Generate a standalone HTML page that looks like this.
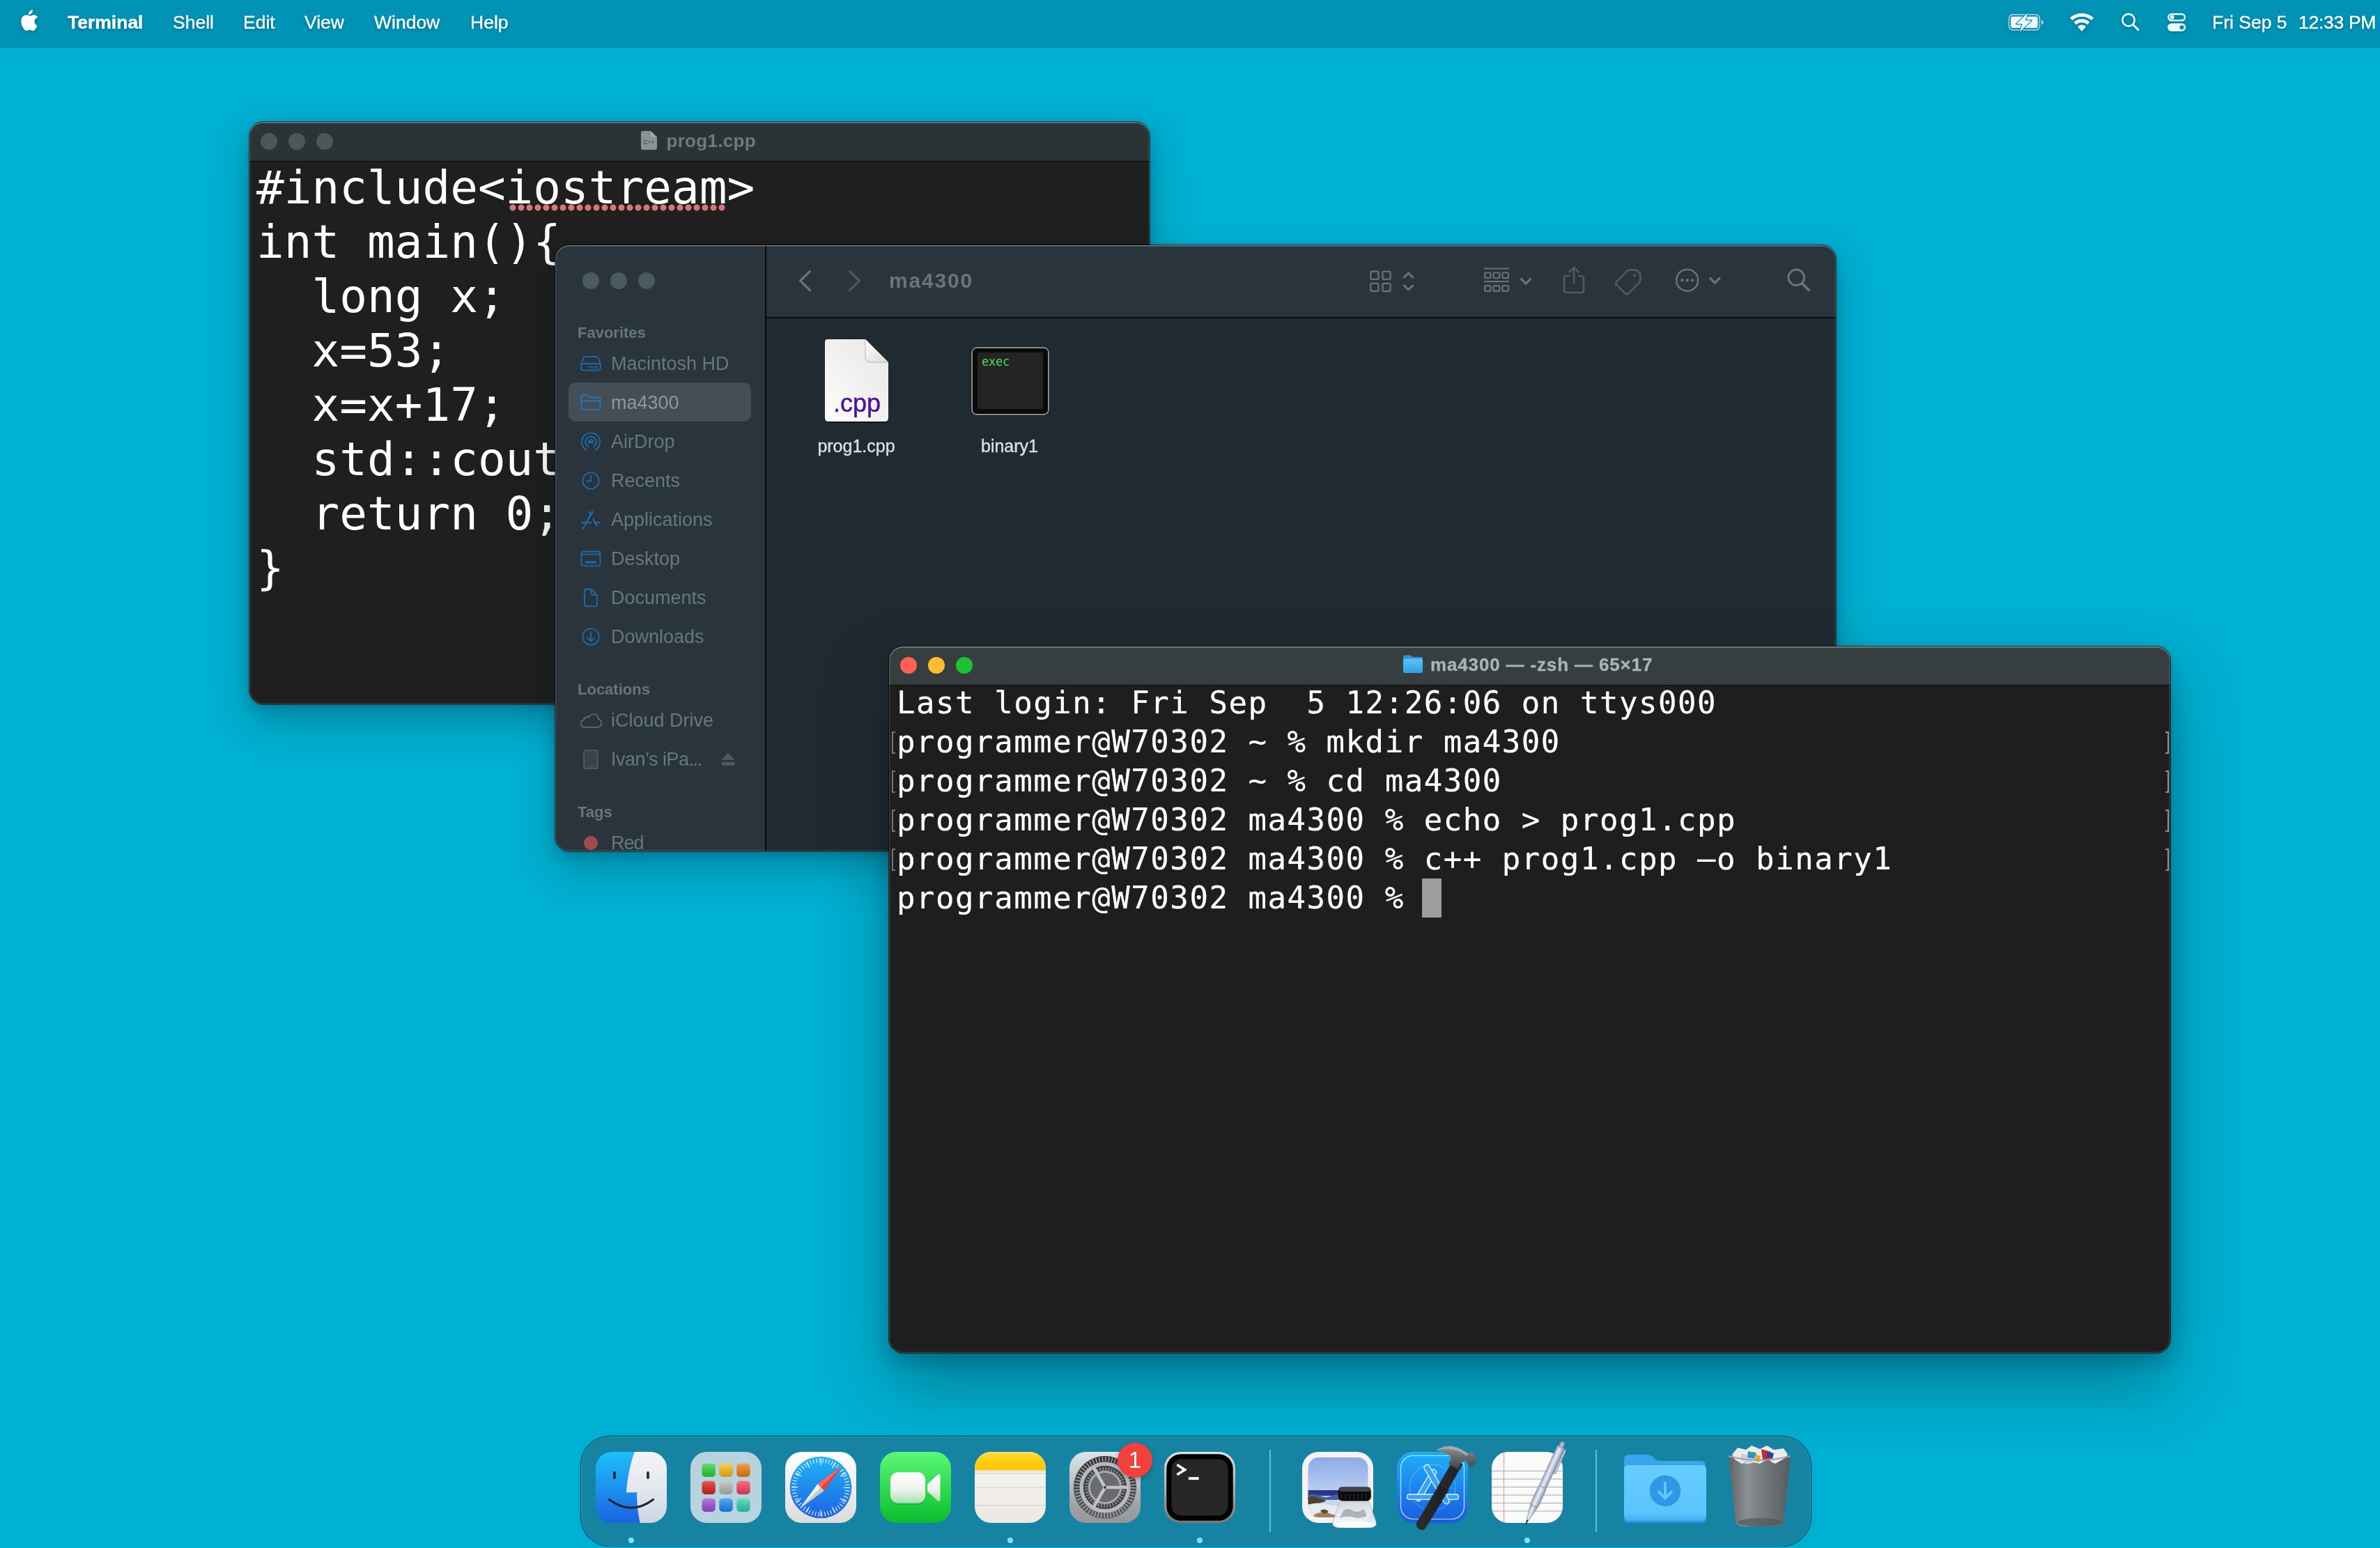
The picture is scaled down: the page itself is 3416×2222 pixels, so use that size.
<!DOCTYPE html>
<html lang="en">
<head>
<meta charset="utf-8">
<title>Desktop</title>
<style>
*{box-sizing:border-box;margin:0;padding:0}
html,body{width:3416px;height:2222px;overflow:hidden}
body{position:relative;background:#00b0d2;font-family:"Liberation Sans",sans-serif;color:#fff;-webkit-font-smoothing:antialiased}
.abs{position:absolute}
/* ---------- menu bar ---------- */
#menubar{will-change:transform;position:absolute;left:0;top:0;width:3416px;height:68.6px;background:#0093b5}
#menubar .mi{position:absolute;top:0;height:68px;line-height:64px;font-size:26.5px;color:#fff;white-space:nowrap;text-shadow:0 2px 4px rgba(0,40,60,.35);-webkit-text-stroke:.35px #fff}
#menubar .b{font-weight:bold}
/* ---------- windows ---------- */
.win{position:absolute;border-radius:20px;overflow:hidden}
.win .in{position:absolute;will-change:transform}
.win .rim{position:absolute;left:0;top:0;right:0;bottom:0;border-radius:20px;pointer-events:none}
.shadow{position:absolute;border-radius:20px}
.tl{position:absolute;width:24px;height:24px;border-radius:50%}
.mono{font-family:"DejaVu Sans Mono","Liberation Mono",monospace}
/* editor */
#ed{left:358px;top:175px;width:1292px;height:836px;background:#1e1f1e;box-shadow:0 0 0 1px rgba(0,0,0,.6)}
#ed .tb{position:absolute;left:0;top:0;width:100%;height:57px;background:#2b3335;border-bottom:1.5px solid #050606}
#ed .tl{background:#4c5759;top:16px}
#ed .title{position:absolute;left:599.5px;top:-1px;line-height:56px;font-size:26px;font-weight:bold;color:#6f787b;white-space:nowrap;letter-spacing:.3px}
#ed pre{position:absolute;left:11px;top:55.6px;font-size:66px;line-height:78px;color:#fffffb;white-space:pre}
/* finder */
#fi{left:797px;top:352px;width:1838px;height:870px;background:#202a31;box-shadow:0 0 0 1px rgba(0,0,0,.65)}
#fi .side{position:absolute;left:0;top:0;width:302px;height:100%;background:#29343c}
#fi .div{position:absolute;left:302px;top:0;width:2px;height:100%;background:#070a0c}
#fi .tbar{position:absolute;left:304px;top:0;right:0;height:105.5px;background:#29343c;border-bottom:2px solid #0b0f12}
#fi .tl{background:#4d5961;top:40px}
#fi .sh{position:absolute;left:33px;font-size:22px;font-weight:bold;color:#66757e;white-space:nowrap}
#fi .si{position:absolute;left:81px;font-size:27px;color:#66777f;white-space:nowrap;line-height:56px;height:56px}
#fi .sel{position:absolute;left:20px;top:198px;width:262px;height:56px;border-radius:10px;background:#434e56}
#fi .ico{position:absolute;left:35px;width:34px;height:34px;margin-top:1px}
#fi .fl{position:absolute;font-size:25px;color:#dde1e4;white-space:nowrap;text-align:center;-webkit-text-stroke:.35px #dde1e4}
/* terminal */
#te{left:1276px;top:928px;width:1839px;height:1014px;background:#1e1e1e;box-shadow:0 0 0 1px rgba(0,0,0,.75)}
#te .tb{position:absolute;left:0;top:0;width:100%;height:57px;background:#363e40;border-bottom:1.5px solid #070808}
#te .title{position:absolute;top:-1px;-webkit-text-stroke:.3px #a9b4b4;line-height:56px;font-size:26px;font-weight:bold;color:#a9b4b4;white-space:nowrap;letter-spacing:.85px}
#te pre{position:absolute;left:11px;top:54px;font-size:44px;letter-spacing:1.535px;-webkit-text-stroke:.2px #fff;line-height:56px;color:#fff;white-space:pre}
#te .br{position:absolute;width:8px;height:38px;border:2px solid #6a6a6a}
/* dock */
#dock{position:absolute;left:833.5px;top:2062px;width:1765px;height:156.5px;border-radius:42px;background:#1783a3;box-shadow:0 0 0 1.5px rgba(10,70,95,.75), inset 0 0 0 1px rgba(120,200,225,.25)}
.di{position:absolute;top:2084px;width:102px;height:102px;border-radius:23px;overflow:hidden}
.dot{position:absolute;top:2207px;width:8px;height:8px;border-radius:50%;background:#6fe9ff}
.dsep{position:absolute;top:2081px;width:2px;height:118px;background:#46c8ea}
</style>
</head>
<body>
<!-- MENUBAR -->
<div id="menubar">
  <svg class="abs" style="left:28.5px;top:14px;filter:drop-shadow(0 2px 3px rgba(0,50,70,.3))" width="28.5" height="33.600" viewBox="0 0 28 33"><path fill="#fff" d="M19.6 0c.2 1.8-.5 3.500-1.500 4.800-1.100 1.300-2.800 2.300-4.500 2.200-.2-1.700.6-3.500 1.600-4.600C16.300 1.100 18.100.1 19.600 0zM25.300 11.200c-.2.100-3.100 1.800-3.100 5.400 0 4.200 3.700 5.700 3.800 5.700 0 .1-.6 2-1.900 4-1.200 1.700-2.400 3.400-4.300 3.400s-2.400-1.100-4.500-1.100c-2.100 0-2.800 1.100-4.500 1.100-1.700 0-3-1.600-4.400-3.600C4.700 23.700 3.300 19.900 3.300 16.300c0-5.800 3.800-8.900 7.500-8.900 2 0 3.600 1.300 4.900 1.300 1.200 0 3.100-1.400 5.300-1.400.9 0 4 .1 6 3z" transform="translate(-2,0)"/></svg>
  <div class="mi b" style="left:97px">Terminal</div>
  <div class="mi" style="left:248px">Shell</div>
  <div class="mi" style="left:349px">Edit</div>
  <div class="mi" style="left:437px">View</div>
  <div class="mi" style="left:537px">Window</div>
  <div class="mi" style="left:675px">Help</div>

  <svg class="abs" style="left:2878px;top:14px;filter:drop-shadow(0 2px 3px rgba(0,50,70,.3))" width="60" height="36" viewBox="0 0 60 36">
    <rect x="5.400" y="7.100" width="44" height="21.800" rx="5.500" fill="none" stroke="rgba(255,255,255,.55)" stroke-width="2"/>
    <path d="M52 14.500q3 .5 3 3.500t-3 3.500z" fill="rgba(255,255,255,.6)"/>
    <rect x="8" y="9.700" width="38.800" height="16.600" rx="3" fill="#eef7fa"/>
    <path d="M32.500 4.600L16 20.300h8.800L21 31.400l16.800-16h-8.900z" fill="#eef7fa" stroke="#0093b5" stroke-width="2.400" stroke-linejoin="round" paint-order="stroke"/>
  </svg>
  <svg class="abs" style="left:2968px;top:14px;filter:drop-shadow(0 2px 3px rgba(0,50,70,.3))" width="40" height="34" viewBox="0 0 40 34" fill="none" stroke="#eef7fa">
    <path d="M4.680 13.280a22.900 22.900 0 0 1 30.640 0" stroke-width="5"/>
    <path d="M10.300 19.530a14.500 14.500 0 0 1 19.400 0" stroke-width="5"/>
    <path d="M20 30.600l-5.700-6.300a8.300 8.300 0 0 1 11.400 0z" fill="#eef7fa" stroke="#eef7fa" stroke-width=".8" stroke-linejoin="round"/>
  </svg>
  <svg class="abs" style="left:3042px;top:15px;filter:drop-shadow(0 2px 3px rgba(0,50,70,.3))" width="32" height="32" viewBox="0 0 32 32" fill="none" stroke="#eef7fa" stroke-linecap="round">
    <circle cx="13" cy="13.800" r="8.700" stroke-width="2.600"/><path d="M19.500 20.300l7.300 7.300" stroke-width="3"/>
  </svg>
  <svg class="abs" style="left:3108px;top:15px;filter:drop-shadow(0 2px 3px rgba(0,50,70,.3))" width="34" height="34" viewBox="0 0 34 34">
    <rect x="4.200" y="5.200" width="23.800" height="9.200" rx="4.600" fill="none" stroke="#eef7fa" stroke-width="2.400"/>
    <circle cx="9.600" cy="9.800" r="3" fill="#eef7fa"/>
    <rect x="3" y="18.600" width="26.200" height="11.400" rx="5.700" fill="#eef7fa"/>
    <circle cx="23.500" cy="24.300" r="3.100" fill="#0093b5"/>
  </svg>
  <div class="mi" style="left:3175px">Fri Sep 5</div>
  <div class="mi" style="left:3299px;letter-spacing:-.3px">12:33 PM</div>
</div>

<!-- EDITOR WINDOW -->
<div class="shadow" style="left:357px;top:174px;width:1294px;height:838px;box-shadow:0 24px 56px rgba(0,28,42,.27), 0 5px 16px rgba(0,28,42,.18)"></div>
<div class="win" id="ed"><div class="in" style="left:-1px;top:0;width:1294px;height:836px">
  <div class="tb">
    <div class="tl" style="left:17px"></div><div class="tl" style="left:57px"></div><div class="tl" style="left:97px"></div>
    <svg class="abs" style="left:562px;top:12px" width="26" height="30" viewBox="0 0 26 30"><path d="M1 4q0-3 3-3h11l9 9v15q0 3-3 3h-17q-3 0-3-3z" fill="#8a9296"/><path d="M15 1v6q0 3 3 3h6z" fill="#a3aaad"/><text x="12.500" y="20" text-anchor="middle" font-family="Liberation Sans, sans-serif" font-size="8.500" fill="#3a4144">C++</text></svg>
    <div class="title">prog1.cpp</div>
  </div>
  <pre class="mono">#include&lt;iostream&gt;
int main(){
  long x;
  x=53;
  x=x+17;
  std::cout&lt;&lt;x;
  return 0;
}</pre>
  <div class="abs" style="left:372.5px;top:117.5px;width:312px;height:10px;background:radial-gradient(circle at 6px 5px,#d8777b 0,#d8777b 4px,rgba(216,119,123,0) 5px);background-size:12px 10px"></div>
</div><div class="rim" style="box-shadow:inset 0 1.5px 0 0 rgba(255,255,255,.28), inset 0 0 0 1.5px rgba(255,255,255,.13)"></div></div>

<!-- FINDER WINDOW -->
<div class="shadow" style="left:796px;top:351px;width:1840px;height:872px;box-shadow:0 24px 56px rgba(0,28,42,.27), 0 5px 16px rgba(0,28,42,.18)"></div>
<div class="win" id="fi"><div class="in" style="left:-1px;top:-1px;width:1840px;height:872px">
  <div class="side"></div>
  <div class="div"></div>
  <div class="tbar"></div>
  <div class="tl" style="left:40px"></div><div class="tl" style="left:80px"></div><div class="tl" style="left:120px"></div>
  <!-- sidebar -->
  <div class="sh" style="top:114px">Favorites</div>
  <div class="sel"></div>
  <div class="si" style="top:142.5px">Macintosh HD</div>
  <div class="si" style="top:198.5px;color:#8c989b">ma4300</div>
  <div class="si" style="top:254.5px">AirDrop</div>
  <div class="si" style="top:310.5px">Recents</div>
  <div class="si" style="top:366.5px">Applications</div>
  <div class="si" style="top:422.5px">Desktop</div>
  <div class="si" style="top:478.5px">Documents</div>
  <div class="si" style="top:534.5px">Downloads</div>
  <div class="sh" style="top:625.5px">Locations</div>
  <div class="si" style="top:654.75px">iCloud Drive</div>
  <div class="si" style="top:710.75px;letter-spacing:-.5px">Ivan’s iPa<span style="letter-spacing:-1.500px">...</span></div>
  <div class="sh" style="top:802px">Tags</div>
  <div class="si" style="top:831.25px;letter-spacing:-1px">Red</div>
  <div class="abs" style="left:42px;top:849px;width:20px;height:20px;border-radius:50%;background:#a14b4c"></div>
  <!-- sidebar icons -->
  <svg class="ico" style="top:152.5px" viewBox="0 0 36 36" fill="none" stroke="#1f6aa6" stroke-width="2" stroke-linejoin="round" stroke-linecap="round"><path d="M9.700 7.400h16.600q2.200 0 3 2.100l3 8.200q.3.900.3 1.800v4.100q0 4.600-4.600 4.600h-20q-4.600 0-4.600-4.600v-4.100q0-.9.300-1.800l3-8.200q.8-2.100 3-2.100z"/><path d="M3.700 19.600q.8-1.600 3.600-1.600h21.400q2.800 0 3.600 1.600"/><path stroke-width="1.500" d="M15.500 22v2.800M18.500 22v2.800M21.500 22v2.800M24.500 22v2.800M27.300 22v2.800"/></svg>
  <svg class="ico" style="top:208.500px" viewBox="0 0 36 36" fill="none" stroke="#2478b8" stroke-width="2" stroke-linejoin="round"><path d="M3.700 12.500v-3.300q0-2.600 2.600-2.600h5.200q1.400 0 2.300 1l1.500 1.700q.7.800 1.900.8h12.300q2.800 0 2.800 2.800v13q0 2.800-2.800 2.800h-23q-2.800 0-2.800-2.800zM3.700 15.200h28.600"/></svg>
  <svg class="ico" style="top:264.500px" viewBox="0 0 36 36" fill="none" stroke="#1f6aa6" stroke-width="2" stroke-linecap="round"><path d="M11.050 30.540a13.900 13.900 0 1 1 13.900 0"/><path d="M13.850 25.690a8.300 8.300 0 1 1 8.300 0"/><path d="M14.880 20.300a3.600 3.600 0 1 1 6.240 0"/><circle cx="18" cy="18.500" r="2" fill="#1f6aa6" stroke="none"/></svg>
  <svg class="ico" style="top:320.500px" viewBox="0 0 36 36" fill="none" stroke="#1f6aa6" stroke-width="2" stroke-linecap="round" stroke-linejoin="round"><circle cx="18" cy="18" r="12.300"/><path d="M18 10.500v8h-6"/></svg>
  <svg class="ico" style="top:376.500px" viewBox="0 0 36 36" fill="none" stroke="#1f6aa6" stroke-width="2.500" stroke-linecap="round"><path d="M20.800 5.800L8.600 27M15.200 5.800l3 5.200M21.600 17l5.800 10M4.200 22.400h13.600M23.600 22.400h8.200M7.200 29.400l-1 1.800"/></svg>
  <svg class="ico" style="top:432.500px" viewBox="0 0 36 36" fill="none" stroke="#1f6aa6" stroke-width="2" stroke-linejoin="round"><rect x="3.700" y="7" width="28.600" height="22" rx="3.400"/><path d="M3.700 11.300h28.600"/><rect x="9.500" y="21.800" width="17" height="3" rx="1" fill="#1f6aa6" stroke="none"/></svg>
  <svg class="ico" style="top:488.500px" viewBox="0 0 36 36" fill="none" stroke="#1f6aa6" stroke-width="2" stroke-linejoin="round"><path d="M8.400 8q0-3 3-3h7.200l9 9v14q0 3-3 3h-13.200q-3 0-3-3zM18.600 5v6q0 3 3 3h6"/></svg>
  <svg class="ico" style="top:544.500px" viewBox="0 0 36 36" fill="none" stroke="#1f6aa6" stroke-width="2" stroke-linecap="round" stroke-linejoin="round"><circle cx="18" cy="18" r="12.300"/><path d="M18 11.200v13M12.800 19.700l5.200 5 5.200-5"/></svg>
  <svg class="ico" style="top:664.750px" viewBox="0 0 36 36" fill="none" stroke="#5c6a72" stroke-width="1.900" stroke-linejoin="round"><path d="M10 28.400q-6.400 0-6.400-5.600 0-4.600 4.600-5.500.2-4.300 4.600-4.600 1.400 0 2.500.7 2.200-4.800 7.400-4.800 7 0 7.600 7.600 4.300 1 4.300 5.800 0 6.400-6.600 6.400z" transform="translate(-.6,0)"/></svg>
  <svg class="ico" style="top:720.750px" viewBox="0 0 36 36" fill="none" stroke="#4f5c64" stroke-width="1.900" stroke-linejoin="round"><rect x="7.600" y="4" width="20.800" height="28" rx="3" fill="#38444c"/><path d="M14 29h8" stroke-width="1.400"/></svg>
  <svg class="abs" style="left:238px;top:728px" width="22" height="22" viewBox="0 0 22 22" fill="#4c5962"><path d="M11 1.500l9.500 10.500h-19z"/><rect x="1.500" y="14.500" width="19" height="5.500" rx="1.500"/></svg>
  <!-- toolbar -->
  <svg class="abs" style="left:346px;top:34px" width="28" height="36" viewBox="0 0 28 36" fill="none" stroke="#66747c" stroke-width="3.200" stroke-linecap="round" stroke-linejoin="round"><path d="M20.400 4.500L6.600 18l13.800 13.500"/></svg>
  <svg class="abs" style="left:416px;top:34px" width="28" height="36" viewBox="0 0 28 36" fill="none" stroke="#4a5760" stroke-width="3.200" stroke-linecap="round" stroke-linejoin="round"><path d="M7.600 4.500L21.400 18 7.600 31.500"/></svg>
  <div class="abs" style="left:480px;top:32px;font-size:30px;font-weight:bold;line-height:40px;color:#68757c;white-space:nowrap;letter-spacing:1.8px">ma4300</div>
  <svg class="abs" style="left:1166px;top:32.500px" width="72" height="40" viewBox="0 0 72 40" fill="none" stroke="#65727a" stroke-width="2.300" stroke-linejoin="round" stroke-linecap="round"><rect x="5.300" y="5.700" width="11.200" height="11.200" rx="2"/><rect x="22.500" y="5.700" width="11.200" height="11.200" rx="2"/><rect x="5.300" y="22.800" width="11.200" height="11.200" rx="2"/><rect x="22.500" y="22.800" width="11.200" height="11.200" rx="2"/><path stroke-width="3" d="M53.200 14.200l6.300-6 6.300 6M53.200 25.800l6.300 6 6.300-6"/></svg>
  <svg class="abs" style="left:1330px;top:31px" width="80" height="42" viewBox="0 0 80 42" fill="none" stroke="#65727a" stroke-width="2.200" stroke-linejoin="round" stroke-linecap="round"><path d="M5 3.500h34M5 22.200h34"/><rect x="5" y="9.500" width="8.600" height="7.600" rx="1.500"/><rect x="17.700" y="9.500" width="8.600" height="7.600" rx="1.500"/><rect x="30.400" y="9.500" width="8.600" height="7.600" rx="1.500"/><rect x="5" y="28.200" width="8.600" height="7.600" rx="1.500"/><rect x="17.700" y="28.200" width="8.600" height="7.600" rx="1.500"/><rect x="30.400" y="28.200" width="8.600" height="7.600" rx="1.500"/><path stroke-width="3.200" d="M57.500 18.500l6.600 6.600 6.600-6.600"/></svg>
  <svg class="abs" style="left:1443px;top:28.500px" width="40" height="46" viewBox="0 0 40 46" fill="none" stroke="#4e5b63" stroke-width="2.700" stroke-linejoin="round" stroke-linecap="round"><path d="M13 16h-3q-4 0-4 4v16q0 4 4 4h20q4 0 4-4v-16q0-4-4-4h-3M20 26.500v-22M13.500 10.200l6.500-6.400 6.500 6.400"/></svg>
  <svg class="abs" style="left:1519px;top:28.500px" width="46" height="46" viewBox="0 0 46 46" fill="none" stroke="#4e5b63" stroke-width="2.700" stroke-linejoin="round"><path d="M5.400 24.300l15.200-15.400q1.600-1.600 3.800-1.600h7.400q2 0 3.400 1.400l2.600 2.600q1.400 1.400 1.400 3.400v7.400q0 2.200-1.600 3.800l-15.400 15.200q-2.400 2.400-4.800 0l-12-12q-2.400-2.400 0-4.800z"/><circle cx="30.800" cy="15.200" r="2" fill="#4e5b63" stroke="none"/></svg>
  <svg class="abs" style="left:1604px;top:30px" width="76" height="42" viewBox="0 0 76 42" fill="none" stroke="#66747c" stroke-width="2.500" stroke-linejoin="round" stroke-linecap="round"><circle cx="21.700" cy="21.200" r="15.500"/><circle cx="14.300" cy="21.200" r="2.100" fill="#66747c" stroke="none"/><circle cx="21.700" cy="21.200" r="2.100" fill="#66747c" stroke="none"/><circle cx="29.100" cy="21.200" r="2.100" fill="#66747c" stroke="none"/><path stroke-width="3.200" d="M54.800 18.500l6.600 6.600 6.600-6.600"/></svg>
  <svg class="abs" style="left:1765px;top:30px" width="42" height="42" viewBox="0 0 42 42" fill="none" stroke="#66747c" stroke-width="3" stroke-linecap="round"><circle cx="17.200" cy="17.300" r="11.300"/><path d="M25.600 25.800l9.300 9.300" stroke-width="3.800"/></svg>
  <!-- files -->
  <svg class="abs" style="left:380px;top:128px" width="108" height="134" viewBox="0 0 108 134">
    <defs><linearGradient id="pg" x1="0" y1="1" x2="1" y2="0"><stop offset="0" stop-color="#fdfdfc"/><stop offset=".5" stop-color="#f1f1ef"/><stop offset="1" stop-color="#e6e8e8"/></linearGradient>
    <linearGradient id="pf" x1="0" y1="0" x2="1" y2="1"><stop offset="0" stop-color="#ffffff"/><stop offset="1" stop-color="#d9dada"/></linearGradient></defs>
    <path d="M8 12q0-4 4-4h53l34 34v79q0 5-5 5h-81q-5 0-5-5z" fill="rgba(0,0,0,.35)" transform="translate(0,2)"/>
    <path d="M8 12q0-4 4-4h54l33 33v80q0 5-5 5h-81q-5 0-5-5z" fill="url(#pg)"/>
    <path d="M66 8l33 33h-25q-8 0-8-8z" fill="url(#pf)"/>
    <path d="M66 8v25q0 8 8 8h25" fill="none" stroke="rgba(0,0,0,.12)" stroke-width="2"/>
    <text x="54" y="112" text-anchor="middle" font-family="Liberation Sans, sans-serif" font-size="36" fill="#4b1296" stroke="#4b1296" stroke-width=".5">.cpp</text>
  </svg>
  <div class="fl" style="left:333px;top:275px;width:200px">prog1.cpp</div>
  <div class="abs" style="left:600px;top:148.5px;width:108px;height:94.5px;border-radius:6px;background:#0a0a0a;box-shadow:0 0 0 1.500px #a3abae, inset 0 0 0 1px #000"></div>
  <div class="abs" style="left:607px;top:155px;width:94px;height:81px;background:#242424"></div>
  <div class="abs mono" style="left:613px;top:156px;font-size:17px;line-height:24px;color:#4be05c;letter-spacing:-.2px">exec</div>
  <div class="fl" style="left:553px;top:275px;width:200px">binary1</div>
</div><div class="rim" style="box-shadow:inset 0 1.5px 0 0 rgba(255,255,255,.25), inset 0 0 0 1.5px rgba(255,255,255,.12)"></div></div>

<!-- TERMINAL WINDOW -->
<div class="shadow" style="left:1275px;top:927px;width:1841px;height:1016px;box-shadow:0 44px 96px rgba(0,22,34,.34), 0 10px 26px rgba(0,22,34,.22)"></div>
<div class="win" id="te"><div class="in" style="left:0;top:-1px;width:1840px;height:1016px">
  <div class="tb">
    <div class="tl" style="left:16px;top:16px;background:#fe5f57"></div>
    <div class="tl" style="left:56px;top:16px;background:#febc2e"></div>
    <div class="tl" style="left:96px;top:16px;background:#19c332"></div>
    <svg class="abs" style="left:737px;top:12px" width="30" height="28" viewBox="0 0 30 28"><defs><linearGradient id="tf" x1="0" y1="0" x2="0" y2="1"><stop offset="0" stop-color="#5fc3f6"/><stop offset="1" stop-color="#2f9fe6"/></linearGradient></defs><path d="M1 4q0-2.500 2.500-2.500h7q1.500 0 2.500 1l1.500 1.500h12q2.500 0 2.500 2.500v3h-28z" fill="#2d93d8"/><rect x="1" y="6.500" width="28" height="20.500" rx="2.500" fill="url(#tf)"/></svg>
    <div class="title" style="left:777px">ma4300 — -zsh — 65×17</div>
  </div>
  <pre class="mono">Last login: Fri Sep  5 12:26:06 on ttys000
programmer@W70302 ~ % mkdir ma4300
programmer@W70302 ~ % cd ma4300
programmer@W70302 ma4300 % echo &gt; prog1.cpp
programmer@W70302 ma4300 % c++ prog1.cpp –o binary1
programmer@W70302 ma4300 % </pre>
  <div class="abs" style="left:4px;top:122.5px;width:5px;height:32.500px;border:2px solid #767676;border-right:none"></div>
  <div class="abs" style="left:1831.500px;top:122.5px;width:5px;height:32.500px;border:2px solid #929292;border-left:none"></div>
  <div class="abs" style="left:4px;top:178.5px;width:5px;height:32.500px;border:2px solid #767676;border-right:none"></div>
  <div class="abs" style="left:1831.500px;top:178.5px;width:5px;height:32.500px;border:2px solid #929292;border-left:none"></div>
  <div class="abs" style="left:4px;top:234.5px;width:5px;height:32.500px;border:2px solid #767676;border-right:none"></div>
  <div class="abs" style="left:1831.500px;top:234.5px;width:5px;height:32.500px;border:2px solid #929292;border-left:none"></div>
  <div class="abs" style="left:4px;top:290.5px;width:5px;height:32.500px;border:2px solid #767676;border-right:none"></div>
  <div class="abs" style="left:1831.500px;top:290.5px;width:5px;height:32.500px;border:2px solid #929292;border-left:none"></div>
  <div class="abs" style="left:765px;top:334px;width:28px;height:56px;background:#9d9d9d"></div>
</div><div class="rim" style="box-shadow:inset 0 1.5px 0 0 rgba(255,255,255,.3), inset 0 0 0 1.5px rgba(255,255,255,.14)"></div></div>

<!-- DOCK -->

<div id="dock"></div>
<!-- Finder -->
<svg class="abs" style="left:855px;top:2084px" width="102" height="102" viewBox="0 0 102 102">
  <defs>
    <clipPath id="sq"><rect x="0" y="0" width="102" height="102" rx="23.500"/></clipPath>
    <linearGradient id="fb" x1="0" y1="0" x2="0" y2="1"><stop offset="0" stop-color="#1cc0fb"/><stop offset=".45" stop-color="#1c97f2"/><stop offset="1" stop-color="#1a63e0"/></linearGradient>
    <linearGradient id="fw" x1="0" y1="0" x2="0" y2="1"><stop offset="0" stop-color="#f4f4f6"/><stop offset=".5" stop-color="#e3e8ee"/><stop offset="1" stop-color="#ccd5e2"/></linearGradient>
  </defs>
  <g clip-path="url(#sq)">
    <rect width="102" height="102" fill="url(#fb)"/>
    <path d="M55.500 0C50 14 45 38 43.500 58.500h15.500c-.5 15 1.500 30 4.500 43.500h38.500v-102z" fill="url(#fw)"/>
    <path d="M55.500 0C50 14 45 38 43.500 58.500h15.500c-.5 15 1.500 30 4.500 43.500" fill="none" stroke="rgba(20,60,120,.25)" stroke-width="1"/>
  </g>
  <rect x="25.200" y="28" width="3.600" height="11" rx="1.800" fill="#1d2630"/>
  <rect x="73.200" y="28" width="3.600" height="11" rx="1.800" fill="#1d2630"/>
  <path d="M19.500 68.500Q51 92 82.500 68.500" fill="none" stroke="#1d2630" stroke-width="3.200" stroke-linecap="round"/>
</svg>
<!-- Launchpad -->
<svg class="abs" style="left:991px;top:2084px" width="102" height="102" viewBox="0 0 102 102">
  <defs>
    <linearGradient id="lg1" x1="0" y1="0" x2="0" y2="1"><stop offset="0" stop-color="#fff" stop-opacity=".25"/><stop offset="1" stop-color="#000" stop-opacity=".18"/></linearGradient>
  </defs>
  <rect width="102" height="102" rx="23.500" fill="#b6d3de"/>
  <g>
    <rect x="16.500" y="16.700" width="19.300" height="19.300" rx="5" fill="#2fd63d"/><rect x="41.400" y="16.700" width="19.300" height="19.300" rx="5" fill="#ffbe1c"/><rect x="66.300" y="16.700" width="19.300" height="19.300" rx="5" fill="#f5830f"/>
    <rect x="16.500" y="41.700" width="19.300" height="19.300" rx="5" fill="#e0261f"/><rect x="41.400" y="41.700" width="19.300" height="19.300" rx="5" fill="#b9bcbe"/><rect x="66.300" y="41.700" width="19.300" height="19.300" rx="5" fill="#fc3f60"/>
    <rect x="16.500" y="66.700" width="19.300" height="19.300" rx="5" fill="#a44fdc"/><rect x="41.400" y="66.700" width="19.300" height="19.300" rx="5" fill="#1e8ff7"/><rect x="66.300" y="66.700" width="19.300" height="19.300" rx="5" fill="#35d6b4"/>
  </g>
  <g fill="url(#lg1)">
    <rect x="16.500" y="16.700" width="19.300" height="19.300" rx="5"/><rect x="41.400" y="16.700" width="19.300" height="19.300" rx="5"/><rect x="66.300" y="16.700" width="19.300" height="19.300" rx="5"/>
    <rect x="16.500" y="41.700" width="19.300" height="19.300" rx="5"/><rect x="41.400" y="41.700" width="19.300" height="19.300" rx="5"/><rect x="66.300" y="41.700" width="19.300" height="19.300" rx="5"/>
    <rect x="16.500" y="66.700" width="19.300" height="19.300" rx="5"/><rect x="41.400" y="66.700" width="19.300" height="19.300" rx="5"/><rect x="66.300" y="66.700" width="19.300" height="19.300" rx="5"/>
  </g>
</svg>
<!-- Safari -->
<svg class="abs" style="left:1127px;top:2084px" width="102" height="102" viewBox="0 0 102 102">
  <defs>
    <linearGradient id="sb" x1="0" y1="0" x2="0" y2="1"><stop offset="0" stop-color="#ffffff"/><stop offset="1" stop-color="#dcdcdc"/></linearGradient>
    <linearGradient id="sc" x1="0" y1="0" x2="0" y2="1"><stop offset="0" stop-color="#1fb4f7"/><stop offset="1" stop-color="#1d62e2"/></linearGradient>
  </defs>
  <rect width="102" height="102" rx="23.500" fill="url(#sb)"/>
  <circle cx="51" cy="51" r="44.300" fill="url(#sc)"/>
  <circle cx="51" cy="51" r="38.500" fill="none" stroke="#fff" stroke-opacity=".9" stroke-width="6.500" stroke-dasharray="1.100 3.380"/>
  <circle cx="51" cy="51" r="36.800" fill="none" stroke="#fff" stroke-opacity=".9" stroke-width="9.500" stroke-dasharray="1.200 18.067" stroke-dashoffset=".6"/>
  <path d="M81.500 20.500L46.300 46.300 55.700 55.700z" fill="#f03c3c"/>
  <path d="M81.500 20.500L46.300 46.300 51 51z" fill="#ff6a60"/>
  <path d="M20.500 81.500L46.300 46.300 55.700 55.700z" fill="#f2f2f2"/>
  <path d="M20.500 81.500L51 51 55.700 55.700z" fill="#c9c9c9"/>
</svg>
<!-- FaceTime -->
<svg class="abs" style="left:1263px;top:2084px" width="102" height="102" viewBox="0 0 102 102">
  <defs>
    <linearGradient id="ft" x1="0" y1="0" x2="0" y2="1"><stop offset="0" stop-color="#5cf777"/><stop offset=".5" stop-color="#2fdc50"/><stop offset="1" stop-color="#0dbb2e"/></linearGradient>
    <linearGradient id="fc" x1="0" y1="0" x2="0" y2="1"><stop offset="0" stop-color="#ffffff"/><stop offset=".55" stop-color="#f0f3f0"/><stop offset="1" stop-color="#a8e0b0"/></linearGradient>
  </defs>
  <rect width="102" height="102" rx="23.500" fill="url(#ft)"/>
  <rect x="15" y="31" width="50" height="45" rx="11" fill="#0a9a28" opacity=".35"/>
  <rect x="15" y="29.300" width="50" height="44.500" rx="11" fill="url(#fc)"/>
  <path d="M68 46.500l14.500-13.500q4-3 4 2v33q0 5-4 2l-14.500-13.500z" fill="url(#fc)"/>
</svg>
<!-- Notes -->
<svg class="abs" style="left:1399px;top:2084px" width="102" height="102" viewBox="0 0 102 102">
  <defs>
    <clipPath id="sq2"><rect x="0" y="0" width="102" height="102" rx="23.500"/></clipPath>
    <linearGradient id="ny" x1="0" y1="0" x2="0" y2="1"><stop offset="0" stop-color="#ffdc4a"/><stop offset=".5" stop-color="#ffcf0f"/><stop offset="1" stop-color="#fdc500"/></linearGradient>
    <linearGradient id="nw" x1="0" y1="0" x2="0" y2="1"><stop offset="0" stop-color="#f8f7f5"/><stop offset="1" stop-color="#ebe8e1"/></linearGradient>
  </defs>
  <g clip-path="url(#sq2)">
    <rect width="102" height="102" fill="url(#nw)"/>
    <rect width="102" height="26" fill="url(#ny)"/>
    <rect y="26" width="102" height="2.500" fill="#e9dfc0"/>
    <path d="M0 31h102" stroke="#b9b5ae" stroke-width="1.400" stroke-dasharray="1.600 2.200"/>
    <path d="M0 51.200h102M0 76.800h102" stroke="#d8d2d6" stroke-width="1.300"/>
  </g>
</svg>
<!-- Settings -->
<svg class="abs" style="left:1535px;top:2084px" width="102" height="102" viewBox="0 0 102 102">
  <defs>
    <linearGradient id="st" x1="0" y1="0" x2="0" y2="1"><stop offset="0" stop-color="#dde5ea"/><stop offset=".35" stop-color="#c3c9cd"/><stop offset=".7" stop-color="#a3a6a8"/><stop offset="1" stop-color="#949698"/></linearGradient>
    <linearGradient id="sg" x1="0" y1="0" x2="0" y2="1"><stop offset="0" stop-color="#2f3132"/><stop offset="1" stop-color="#5b5d5f"/></linearGradient>
  </defs>
  <rect width="102" height="102" rx="23.500" fill="url(#st)"/>
  <circle cx="51" cy="51" r="45" fill="url(#sg)"/>
  <circle cx="51" cy="51" r="40.300" fill="none" stroke="#b4b8bb" stroke-width="7.400" stroke-dasharray="1.300 3.222"/>
  <circle cx="51" cy="51" r="33.800" fill="none" stroke="#b6babd" stroke-width="5.600"/>
  <circle cx="51" cy="51" r="31" fill="#434547"/>
  <circle cx="51" cy="51" r="26.600" fill="none" stroke="#a3a7aa" stroke-width="5" stroke-dasharray="1.200 2.978"/>
  <circle cx="51" cy="51" r="22.400" fill="none" stroke="#a9adb0" stroke-width="3.200"/>
  <circle cx="51" cy="51" r="20.800" fill="#696b6e"/>
  <g stroke="#c0c3c6" stroke-width="4.600" stroke-linecap="butt"><path d="M51 51h32.500M51 51L34.750 79.150M51 51L34.750 22.850"/></g>
  <circle cx="51" cy="51" r="2" fill="#3a3c3e"/>
</svg>
<div class="abs" style="left:1604px;top:2070.500px;width:50px;height:50px;border-radius:50%;background:#f2403a;box-shadow:0 2px 6px rgba(0,40,60,.35);color:#fff;font-size:33px;line-height:50px;text-align:center">1</div>
<!-- Terminal -->
<svg class="abs" style="left:1671px;top:2084px" width="102" height="102" viewBox="0 0 102 102">
  <defs><linearGradient id="tg" x1="0" y1="0" x2="0" y2="1"><stop offset="0" stop-color="#dfe2e5"/><stop offset=".5" stop-color="#a9acaf"/><stop offset="1" stop-color="#77797b"/></linearGradient></defs>
  <rect width="102" height="102" rx="23.500" fill="url(#tg)"/>
  <rect x="3.300" y="3.300" width="95.400" height="95.400" rx="20.500" fill="#030303"/>
  <rect x="10.500" y="10.500" width="81" height="81" rx="14" fill="#262626"/>
  <path d="M18.400 18.600l11.200 7.100-11.200 7.100" fill="none" stroke="#fff" stroke-width="3.600" stroke-linejoin="miter"/>
  <rect x="34.900" y="36.200" width="14.700" height="3.900" fill="#fff"/>
</svg>
<div class="dsep" style="left:1822px"></div>
<!-- Preview -->
<svg class="abs" style="left:1869px;top:2084px" width="116" height="116" viewBox="0 0 116 116">
  <defs>
    <clipPath id="pv"><rect x="8.500" y="8" width="86" height="86" rx="15"/></clipPath>
    <linearGradient id="sky" x1="0" y1="0" x2="0" y2="1"><stop offset="0" stop-color="#8da9e8"/><stop offset="1" stop-color="#bcd0f2"/></linearGradient>
    <linearGradient id="gl" x1="0" y1="0" x2="0" y2="1"><stop offset="0" stop-color="#c9d0d6" stop-opacity=".8"/><stop offset=".6" stop-color="#e9edf0" stop-opacity=".9"/><stop offset="1" stop-color="#fbfbfc" stop-opacity=".97"/></linearGradient>
  </defs>
  <rect width="102" height="102" rx="23.500" fill="#f4f3f1"/>
  <g clip-path="url(#pv)">
    <rect x="8" y="8" width="87" height="50" fill="url(#sky)"/>
    <rect x="8" y="55" width="87" height="12" fill="#26378a"/>
    <rect x="8" y="63" width="87" height="34" fill="#c9d8e8"/>
    <path d="M8 62q10-3 18 1t16 0 20 2 33-3v7h-87z" fill="#4a5f9f"/>
    <path d="M8 66q6-4 12-1t12 4-8 5-16 0z" fill="#4d4334"/>
    <path d="M8 76q14-5 30 0t30-2 27 2v20h-87z" fill="#e4ebf3"/>
    <path d="M14 93q10-9 24-5t22 7h-46z" fill="#a07f55"/>
    <path d="M26 84q6-3 10 0t-2 4-8-4z" fill="#5a4e3c"/>
  </g>
  <path d="M56 66l-12 34q-2 8 8 9h46q10-1 8-9l-12-34z" fill="url(#gl)" stroke="#9aa1a6" stroke-opacity=".6" stroke-width="1"/>
  <ellipse cx="75" cy="104.500" rx="30" ry="4.500" fill="#fff" opacity=".85"/>
  <path d="M58 86q6-7 14-2t16-2l5 10q-10 5-19 2t-20 1z" fill="#7d8890" opacity=".55"/>
  <rect x="51.800" y="50.500" width="47" height="20" rx="6" fill="#0a0a0b"/>
  <rect x="52.500" y="50.500" width="45.600" height="6.500" rx="3.200" fill="#404245"/>
  <path d="M56 60v9M62 60v9M68 60v9M74 60v9M80 60v9M86 60v9M92 60v9" stroke="#2a2c2e" stroke-width="1.200"/>
</svg>
<!-- Xcode -->
<svg class="abs" style="left:2005px;top:2068px" width="124" height="134" viewBox="0 0 124 134">
  <defs>
    <linearGradient id="xb" x1="0" y1="0" x2="0" y2="1"><stop offset="0" stop-color="#1db0f8"/><stop offset=".5" stop-color="#1a86ee"/><stop offset="1" stop-color="#1a5ce0"/></linearGradient>
    <linearGradient id="hm" x1="0" y1="0" x2="1" y2="0"><stop offset="0" stop-color="#4b4e52"/><stop offset=".5" stop-color="#2a2c2f"/><stop offset="1" stop-color="#1c1d20"/></linearGradient>
    <linearGradient id="hh" x1="0" y1="0" x2="0" y2="1"><stop offset="0" stop-color="#8d9297"/><stop offset="1" stop-color="#3d4044"/></linearGradient>
  </defs>
  <rect x="0" y="16" width="102" height="102" rx="23.500" fill="url(#xb)"/>
  <rect x="5.500" y="21.500" width="91" height="91" rx="18" fill="none" stroke="#fff" stroke-opacity=".75" stroke-width="1.200"/>
  <circle cx="51" cy="67" r="33" fill="none" stroke="#fff" stroke-opacity=".3" stroke-width="1"/>
  <g fill="#3aa2f6" stroke="#fff" stroke-opacity=".9" stroke-width="1.300" stroke-linejoin="round">
    <path d="M40 36.500q2.200-3.500 5.500-1.500t1.500 5.500l-21.500 37q-2.200 3.500-5.500 1.500t-1.500-5.500z" transform="translate(9,7)"/>
    <path d="M18 77h67q3.500 0 3.500 3.700t-3.500 3.700h-67q-3.500 0-3.500-3.700t3.500-3.700z"/>
    <path d="M46.500 36.500q-2.200-3.500-5.500-1.500t-1.500 5.500l28 48q2.200 3.500 5.500 1.500t1.500-5.500z"/>
  </g>
  <path d="M81.500 26.200l13 7.600-53 91q-3.500 5.500-9.500 2t-3.500-9.600z" fill="url(#hm)"/>
  <path d="M62 63l13 7.600-33.500 54.200q-3.500 5.500-9.500 2t-3.500-9.600z" fill="#1f2023" opacity=".75"/>
  <path d="M56.500 13.500q17-11 36-1l10.500 6.500 5-3.500 8.500 13.500-10.500 9-7.500-9.500-6 3-4.500 10-14-8 4.500-9.500q-8-7.500-22-10z" fill="url(#hh)"/>
  <path d="M56.500 13.500q17-11 36-1l10.500 6.500-3 2.500q-18-13-43.500-8z" fill="#a3a8ad"/>
</svg>
<!-- TextEdit -->
<svg class="abs" style="left:2141px;top:2066px" width="112" height="136" viewBox="0 0 112 136">
  <defs>
    <clipPath id="tx"><rect x="0" y="18" width="102" height="102" rx="23.500"/></clipPath>
    <linearGradient id="pn" x1="0" y1="0" x2="1" y2="0"><stop offset="0" stop-color="#9aa6bb"/><stop offset=".45" stop-color="#e9eef6"/><stop offset="1" stop-color="#8794ab"/></linearGradient>
  </defs>
  <g clip-path="url(#tx)">
    <rect x="0" y="18" width="102" height="102" fill="#fafaf8"/>
    <g stroke="#a8a2b8" stroke-width="1.200"><path d="M0 45.500h102M0 57h102M0 68.500h102M0 80h102M0 91.500h102M0 103h102"/></g>
    <path d="M17.500 18v102" stroke="#f0a0a0" stroke-width="1.300"/>
  </g>
  <g transform="rotate(24.500 98 14)">
    <rect x="92.500" y="10" width="11" height="64" rx="2" fill="url(#pn)" stroke="#6d7a92" stroke-width=".6"/>
    <rect x="95" y="3" width="6" height="9" rx="1.500" fill="#aab6cc" stroke="#6d7a92" stroke-width=".6"/>
    <rect x="104" y="12" width="3" height="38" rx="1.500" fill="#b9c4d8" stroke="#6d7a92" stroke-width=".5"/>
    <rect x="92" y="74" width="12" height="30" rx="2" fill="url(#pn)" stroke="#6d7a92" stroke-width=".6"/>
    <path d="M92.500 104h11l-4 22h-3z" fill="url(#pn)" stroke="#6d7a92" stroke-width=".6"/>
    <path d="M96.500 126h3l-1.500 8z" fill="#2c2f35"/>
  </g>
</svg>
<div class="dsep" style="left:2290px"></div>
<!-- Downloads folder -->
<svg class="abs" style="left:2329px;top:2085px" width="122" height="104" viewBox="0 0 122 104">
  <defs>
    <linearGradient id="df" x1="0" y1="0" x2="0" y2="1"><stop offset="0" stop-color="#66cdff"/><stop offset=".85" stop-color="#5cc4fd"/><stop offset="1" stop-color="#45aef5"/></linearGradient>
  </defs>
  <path d="M2 10q0-7 7-7h27q4 0 7 3l4 4q2 2 6 2h59q7 0 7 7v8h-117z" fill="#38a6ee"/>
  <path d="M2 96q0 5 5 5h108q5 0 5-5v-4h-118z" fill="#2e8fdd"/>
  <rect x="2" y="18" width="118" height="80" rx="6" fill="url(#df)"/>
  <circle cx="61" cy="55" r="22.300" fill="#2f97e6"/>
  <path d="M61 43.500v21M52 56.500l9 9 9-9" fill="none" stroke="#63caff" stroke-width="3.600" stroke-linecap="round" stroke-linejoin="round"/>
</svg>
<!-- Trash -->
<svg class="abs" style="left:2476px;top:2072px" width="100" height="122" viewBox="0 0 100 122">
  <defs>
    <linearGradient id="tr" x1="0" y1="0" x2="1" y2="0"><stop offset="0" stop-color="#5d6468"/><stop offset=".3" stop-color="#8a9094"/><stop offset=".6" stop-color="#71777b"/><stop offset="1" stop-color="#555b5f"/></linearGradient>
  </defs>
  <path d="M5 18h89l-10 94q-1 7-9 7h-51q-8 0-9-7z" fill="url(#tr)"/>
  <ellipse cx="49.500" cy="113" rx="31" ry="6" fill="#4a5054" opacity=".6"/>
  <path d="M10 16l8-10 12 3 8-6 12 5 10-5 10 6 14-2 6 9-4 5-14 8-12-6-10 6-14-3-12 3-10-6z" fill="#e9ebec"/>
  <path d="M24 14l10 4 6 10-10 2-8-8z" fill="#cfd3d5"/><path d="M52 8l14 4-2 14-10-2z" fill="#c2302c"/><path d="M33 11l12 3-3 8-10-2z" fill="#2b8fe0"/><path d="M60 12l10 2-2 8-8-2z" fill="#2d3f9a"/><path d="M44 16l7 2-2 9-6-2z" fill="#e6a820"/><path d="M38 12l6 1-1 4-6-1z" fill="#2fae4a"/>
  <path d="M5 18q44 12 89 0" fill="none" stroke="#9ba1a5" stroke-width="2.200"/>
</svg>
<div class="dot" style="left:902px"></div>
<div class="dot" style="left:1446px"></div>
<div class="dot" style="left:1718px"></div>
<div class="dot" style="left:2188px"></div>

</body>
</html>
